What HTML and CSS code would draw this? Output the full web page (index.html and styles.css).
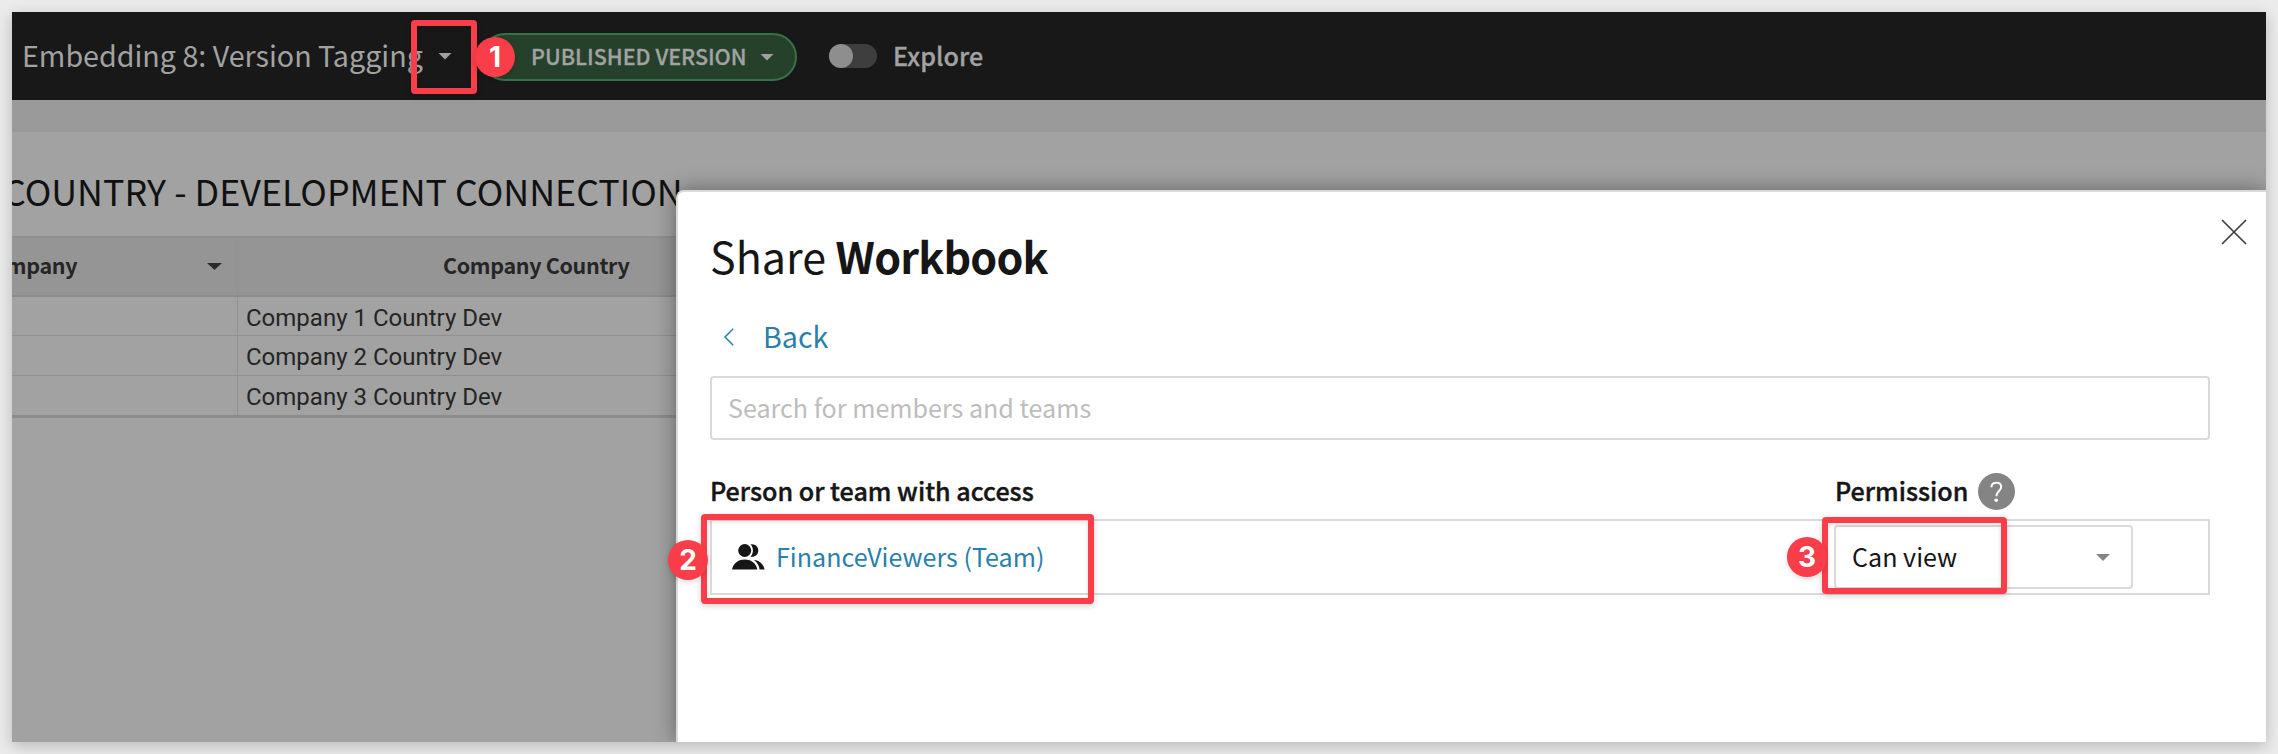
FILE: index.html
```html
<!DOCTYPE html>
<html lang="en">
<head>
<meta charset="utf-8">
<title>Share Workbook</title>
<link rel="stylesheet" href="styles.css">
</head>
<body>
<div class="frame">
  <header class="topbar">
    <span class="doc-title">Embedding 8: Version Tagging</span>
    <span class="caret title-caret"></span>
    <div class="pill"><span class="pill-text">PUBLISHED VERSION</span><span class="caret"></span></div>
    <span class="toggle"><span class="knob"></span></span>
    <span class="explore">Explore</span>
  </header>
  <div class="strip"></div>
  <main class="canvas">
    <div class="heading"><span>COUNTRY - DEVELOPMENT CONNECTION</span></div>
    <div class="table">
      <div class="cell th first"><span class="th-text">Company</span><span class="caret th-caret"></span></div>
      <div class="cell th second"><span class="th-text">Company Country</span></div>
      <div class="cell"></div><div class="cell name">Company 1 Country Dev</div>
      <div class="cell"></div><div class="cell name">Company 2 Country Dev</div>
      <div class="cell"></div><div class="cell name">Company 3 Country Dev</div>
    </div>
  </main>
  <section class="modal">
    <svg class="close" viewBox="0 0 26 26"><path d="M1 1L25 25M25 1L1 25" fill="none" stroke="#3f3f3f" stroke-width="1.7"/></svg>
    <h1 class="modal-title">Share <b>Workbook</b></h1>
    <a class="back"><svg class="chevron" viewBox="0 0 12 18"><path d="M10.2 0.8L2 9L10.2 17.2" fill="none" stroke="#2a7fab" stroke-width="1.5"/></svg><span>Back</span></a>
    <div class="search"><span>Search for members and teams</span></div>
    <div class="labels">
      <span class="label-person">Person or team with access</span>
      <span class="label-perm">Permission</span>
      <svg class="help" viewBox="0 0 37 37"><circle cx="18.5" cy="18.5" r="18.5" fill="#848484"/><path d="M13.5 14.2C13.5 11 15.6 9.7 18.3 9.7C21.2 9.7 23.2 11.4 23.2 14C23.2 17.7 18.3 18.5 18.3 23.3" fill="none" stroke="#fff" stroke-width="2"/><circle cx="18.2" cy="27.3" r="1.8" fill="#fff"/></svg>
    </div>
    <div class="member">
      <svg class="people" viewBox="0 0 33 26"><circle cx="12.7" cy="6.5" r="6.5" fill="#161616"/><path d="M18.6 0.3C23 -0.5 26.3 2.5 26.3 6.5C26.3 10.7 22.8 13.5 18.6 12.7C21.7 9 21.7 4 18.6 0.3Z" fill="#161616"/><path d="M0 25.5C1.5 18.5 7 15.5 12.7 15.5C18.5 15.5 24 18.5 25.3 25.5Z" fill="#161616"/><path d="M22 16C28 16.5 31.5 20.5 32.6 25.5H27.6C27.2 21.5 25.2 18.5 22 16Z" fill="#161616"/></svg>
      <span class="member-name">FinanceViewers (Team)</span>
      <div class="select"><span>Can view</span><span class="caret select-caret"></span></div>
    </div>
  </section>
</div>
<div class="mark mark-1"></div><div class="badge badge-1">1</div>
<div class="mark mark-2"></div><div class="badge badge-2">2</div>
<div class="mark mark-3"></div><div class="badge badge-3">3</div>
</body>
</html>
```

FILE: styles.css
```css
* { box-sizing: border-box; }
body {
  margin: 0;
  width: 2278px;
  height: 754px;
  padding: 12px;
  overflow: hidden;
  position: relative;
  background: #ebebeb;
  color: #161616;
  font-family: "Noto Sans CJK SC", "Open Sans", sans-serif;
  font-size: 25.1px;
}
.frame {
  position: relative;
  height: 730px;
  background: #a2a2a2;
  box-shadow: 0 4px 14px rgba(0, 0, 0, .22);
}
.caret {
  flex: none;
  width: 14px;
  height: 7px;
  background: #a0a0a0;
  clip-path: polygon(0 0, 100% 0, 50% 100%);
}
.topbar {
  height: 88px;
  display: flex;
  align-items: center;
  padding-left: 10px;
  background: #181818;
  color: #a2a2a2;
  white-space: nowrap;
}
.doc-title { width: 400px; padding-bottom: 3px; font-size: 28.65px; }
.title-caret { margin-left: 16px; }
.pill {
  width: 316px;
  height: 48px;
  margin: 2px 0 0 29px;
  border: 2px solid #377247;
  border-radius: 24px;
  background: #25402b;
  display: flex;
  align-items: center;
}
.pill-text { flex: none; width: 277px; padding: 0 0 3px 48px; font-size: 21.5px; font-weight: 500; -webkit-text-stroke: .3px; }
.toggle { width: 48px; height: 24px; border-radius: 12px; background: #3e3e3e; margin-left: 32px; }
.knob { display: block; width: 24px; height: 24px; border-radius: 12px; background: #8e8e8e; }
.explore { margin-left: 16px; padding-bottom: 3px; font-weight: 500; -webkit-text-stroke: .3px; }
.strip { height: 32px; background: #9a9a9a; }
.heading { height: 104px; width: 700px; overflow: hidden; white-space: nowrap; color: #111; font-size: 35.8px; line-height: 117px; }
.heading span { margin-left: -9px; }
.table {
  display: grid;
  grid-template-columns: 226px 1fr;
  grid-template-rows: 59px 39px 40px 39px;
  border-top: 2px solid #8f8f8f;
  border-bottom: 3px solid #8c8c8c;
}
.cell { border-right: 1px solid #919191; border-bottom: 1px solid #919191; white-space: nowrap; overflow: hidden; }
.cell:nth-last-child(-n+2) { border-bottom: 0; }
.th { background: #959595; border-bottom: 2px solid #8c8c8c; display: flex; align-items: center; color: #252525; font-size: 21.5px; font-weight: 700; letter-spacing: -.35px; }
.th-text { padding-bottom: 4px; }
.first { padding-left: 0; justify-content: space-between; }
.first .th-text { margin-left: -33px; }
.th-caret { background: #2b2b2b; margin-right: 15px; width: 15px; }
.second { padding-left: 205px; }
.name { padding-left: 8px; font-family: Roboto, sans-serif; font-size: 24px; line-height: 43px; color: #252525; }
.modal {
  position: absolute;
  left: 664px;
  top: 178px;
  right: 0;
  bottom: 0;
  padding: 37px 56px 0 32px;
  border: 2px solid #dadada;
  border-width: 2px 0 0 2px;
  border-radius: 8px 0 0 0;
  background: #fff;
  box-shadow: 0 0 22px rgba(0, 0, 0, .4);
  clip-path: inset(-40px 0 0 -40px);
}
.close { position: absolute; right: 19px; top: 27px; width: 26px; height: 26px; }
.modal-title { margin: 0; height: 66px; font-size: 43px; font-weight: 400; line-height: 52px; }
.modal-title b { font-weight: 700; letter-spacing: -.8px; }
.back { display: flex; align-items: center; height: 81px; padding-bottom: 1px; color: #2a7fab; font-size: 28.65px; padding-left: 13px; }
.chevron { width: 12px; height: 18px; margin-right: 28px; margin-top: 4px; }
.search { height: 64px; border: 2px solid #dadada; border-radius: 4px; padding-left: 16px; display: flex; align-items: center; color: #bdbdbd; padding-bottom: 2px; }
.labels { display: flex; align-items: center; height: 79px; padding-top: 23px; font-weight: 500; -webkit-text-stroke: .4px; }
.label-person { width: 1125px; padding-bottom: 3px; }
.label-perm { width: 143px; padding-bottom: 3px; }
.help { width: 37px; height: 37px; }
.member { height: 76px; border: 2px solid #dadada; display: flex; align-items: center; padding-left: 20px; }
.people { width: 33px; height: 26px; }
.member-name { margin-left: 11px; width: 1058px; padding-bottom: 2px; color: #2a7fab; }
.select { width: 299px; height: 64px; border: 2px solid #dadada; border-radius: 4px; display: flex; align-items: center; justify-content: space-between; padding: 0 21px 2px 16px; }
.select-caret { background: #858585; margin-top: 3px; }
.mark { position: absolute; border: 6px solid #f93d49; border-radius: 4px; box-shadow: 0 2px 6px rgba(0, 0, 0, .18), inset 0 2px 5px rgba(0, 0, 0, .12); }
.mark-1 { left: 411px; top: 20px; width: 66px; height: 74px; }
.mark-2 { left: 701px; top: 514px; width: 393px; height: 90px; }
.mark-3 { left: 1822px; top: 517px; width: 185px; height: 77px; }
.badge { position: absolute; width: 40px; height: 40px; border-radius: 50%; background: #f93d49; color: #fff; text-align: center; font: 700 28px/40px Inter, sans-serif; box-shadow: 0 2px 5px rgba(0, 0, 0, .15); }
.badge-1 { left: 475px; top: 37px; }
.badge-2 { left: 668px; top: 540px; }
.badge-3 { left: 1787px; top: 537px; }
```
